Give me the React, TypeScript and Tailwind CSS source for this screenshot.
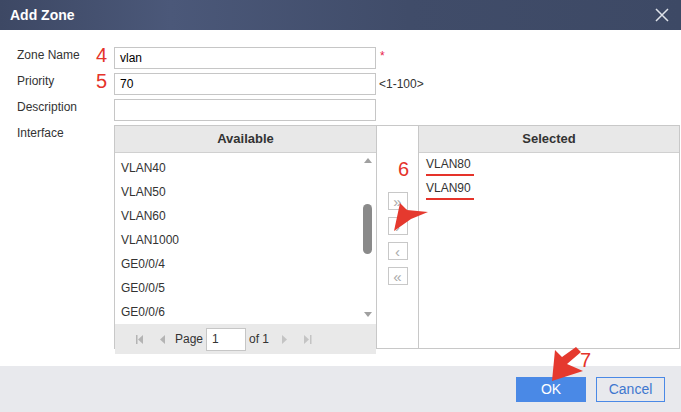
const available = ["VLAN40", "VLAN50", "VLAN60", "VLAN1000", "GE0/0/4", "GE0/0/5", "GE0/0/6"];
const selected = ["VLAN80", "VLAN90"];

function Field({ label, value, note, mark }: { label: string; value?: string; note?: React.ReactNode; mark?: string }) {
  return (
    <div className="relative flex h-[26px] items-start">
      <div className="w-[114px] pl-[17px] pt-[1px] text-[12px] leading-[14px] text-[#333]">{label}</div>
      {mark && (
        <span className="absolute left-[96px] top-[-3px] text-[20px] leading-[22px] text-[#e5332a]">{mark}</span>
      )}
      <div className="flex h-[22px] w-[262px] items-center border border-[#c6c6c6] bg-white px-[5px] text-[12px] text-black">
        {value}
      </div>
      {note}
    </div>
  );
}

export default function App() {
  return (
    <div
      className="relative flex h-[412px] w-[681px] flex-col overflow-hidden bg-white"
      style={{ fontFamily: '"Liberation Sans", Arial, sans-serif' }}
    >
      <div className="flex h-[30px] shrink-0 items-center justify-between bg-[linear-gradient(90deg,#3d4864_0%,#4b5879_25%,#404c69_60%,#3d4965_100%)] pl-[10px] pr-[12px]">
        <span className="text-[14px] font-bold text-white">Add Zone</span>
        <svg width="14" height="14" viewBox="0 0 14 14" className="text-[#dfe3ea]">
          <path d="M1 1L13 13M13 1L1 13" stroke="currentColor" strokeWidth="1.5" />
        </svg>
      </div>

      <div className="flex-1 pt-[17px]">
        <Field label="Zone Name" value="vlan" mark="4" note={<span className="ml-[4px] mt-[3px] text-[12px] leading-none text-[#e8204a]">*</span>} />
        <Field label="Priority" value="70" mark="5" note={<span className="ml-[3px] mt-[4px] text-[12px] leading-[14px] text-[#333]">&lt;1-100&gt;</span>} />
        <Field label="Description" />

        <div className="flex">
          <div className="w-[114px] pl-[17px] pt-[1px] text-[12px] leading-[14px] text-[#333]">Interface</div>
          <div className="flex h-[224px] w-[566px] border border-[#c8c8c8]">
            <div className="flex w-[262px] flex-col border-r border-[#c8c8c8]">
              <div className="flex h-[27px] shrink-0 items-center justify-center border-b border-[#d0d0d0] bg-[#e8e8e8] text-[13px] font-bold text-[#333]">
                Available
              </div>
              <div className="relative flex flex-1">
                <div className="flex-1 pl-[6px] pt-[3px]">
                  {available.map((v) => (
                    <div key={v} className="flex h-[24px] items-center text-[12px] text-[#333]">{v}</div>
                  ))}
                </div>
                <div className="relative w-[14px]">
                  <svg width="8" height="5" className="absolute left-[2px] top-[5px]">
                    <path d="M0 5L4 0L8 5Z" fill="#a0a0a0" />
                  </svg>
                  <div className="absolute left-[1px] top-[51px] h-[50px] w-[9px] rounded-full bg-[#8a8a8a]" />
                  <svg width="8" height="5" className="absolute bottom-[7px] left-[2px]">
                    <path d="M0 0L4 5L8 0Z" fill="#a0a0a0" />
                  </svg>
                </div>
              </div>
              <div className="flex h-[30px] shrink-0 items-center bg-[#e9e9e9] pl-[21px] text-[12px] text-[#333]">
                <svg width="8" height="9" className="mr-[16px]">
                  <rect x="0" y="0" width="1.5" height="9" fill="#b4b4b4" />
                  <path d="M7 0L2 4.5L7 9Z" fill="#b4b4b4" />
                </svg>
                <svg width="6" height="9" className="mr-[9px]">
                  <path d="M5 0L0 4.5L5 9Z" fill="#b4b4b4" />
                </svg>
                <span>Page</span>
                <div className="mx-[3px] flex h-[23px] w-[40px] items-center border border-[#c6c6c6] bg-white px-[5px]">1</div>
                <span>of 1</span>
                <svg width="6" height="9" className="ml-[13px]">
                  <path d="M0 0L5 4.5L0 9Z" fill="#c4c4c4" />
                </svg>
                <svg width="8" height="9" className="ml-[16px]">
                  <path d="M0 0L5 4.5L0 9Z" fill="#c4c4c4" />
                  <rect x="6" y="0" width="1.5" height="9" fill="#c4c4c4" />
                </svg>
              </div>
            </div>

            <div className="flex w-[42px] flex-col items-center gap-[7px] border-r border-[#c8c8c8] pt-[66px]">
              {["»", "›", "‹", "«"].map((g) => (
                <div key={g} className="flex h-[18px] w-[20px] items-center justify-center border border-[#c8c8c8] bg-white text-[15px] leading-none text-[#aaa]">
                  {g}
                </div>
              ))}
            </div>

            <div className="flex flex-1 flex-col">
              <div className="flex h-[27px] shrink-0 items-center justify-center border-b border-[#d0d0d0] bg-[#e8e8e8] text-[13px] font-bold text-[#333]">
                Selected
              </div>
              <div className="pl-[7px]">
                {selected.map((v) => (
                  <div key={v} className="flex h-[24px] items-center text-[12px] text-[#333]">
                    <span className="border-b-[2.5px] border-[#e5332a] pb-[1px] pr-[3px]">{v}</span>
                  </div>
                ))}
              </div>
            </div>
          </div>
        </div>
      </div>

      <div className="flex h-[46px] shrink-0 items-center justify-end gap-[10px] bg-[#e8e9ed] pr-[16px]">
        <button className="h-[25px] w-[70px] bg-[#4a89e6] text-[14px] text-white">OK</button>
        <button className="h-[25px] w-[69px] border border-[#4a89e6] text-[14px] text-[#3f77cf]">Cancel</button>
      </div>

      <span className="absolute left-[398px] top-[158px] text-[20px] leading-[22px] text-[#e5332a]">6</span>
      <span className="absolute left-[580px] top-[349px] text-[20px] leading-[22px] text-[#e5332a]">7</span>

      <svg className="pointer-events-none absolute left-0 top-0" width="681" height="412">
        <path d="M394 231L400 203L407 210L428 212L411 219Z" fill="#e5392e" />
        <path d="M552 381L555 350L562 357L576 347L581 352L567 364L583 371Z" fill="#e5392e" />
      </svg>
    </div>
  );
}
